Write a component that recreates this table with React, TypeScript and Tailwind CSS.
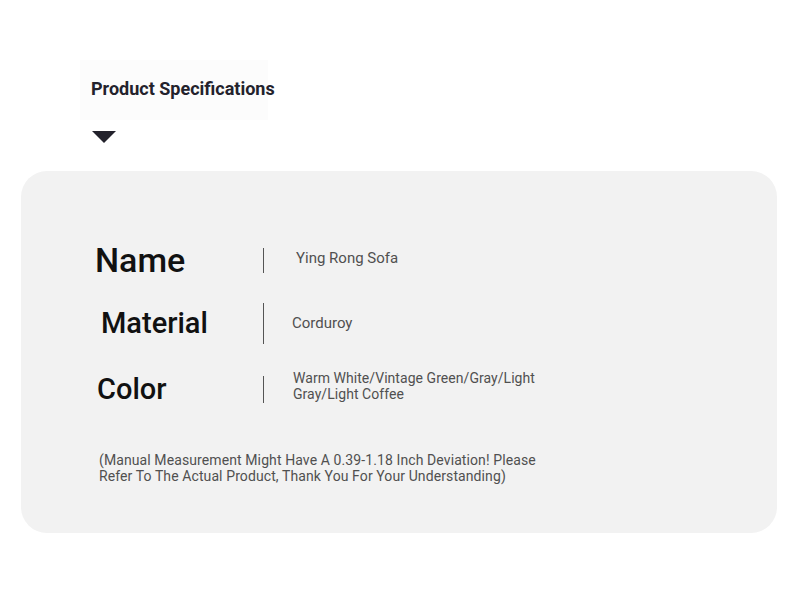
const rows = [
  { label: "Name", labelCls: "pl-0 text-[34px]", bar: "h-[25px]", valueCls: "ml-[32px] mb-[4px] text-[15px] leading-[18px]", value: ["Ying Rong Sofa"] },
  { label: "Material", labelCls: "pl-[6px] text-[29px]", bar: "h-[41px]", valueCls: "ml-[28px] text-[15px] leading-[18px]", value: ["Corduroy"] },
  { label: "Color", labelCls: "pl-[2px] text-[29px]", bar: "h-[27px]", valueCls: "ml-[29px] mb-[6px] text-[14px] leading-[16px] tracking-[0.05px]", value: ["Warm White/Vintage Green/Gray/Light", "Gray/Light Coffee"] },
];

export default function App() {
  return (
    <div className="w-[790px] h-[599px] bg-white pt-[60px] font-['Roboto',sans-serif] overflow-hidden">
      <div className="ml-[80px] w-[188px] h-[60px] bg-[#fcfcfc] flex items-center pl-[11px]">
        <h2 className="text-[18px] font-bold text-[#23222c] mb-[4px] whitespace-nowrap">Product Specifications</h2>
      </div>
      <div className="ml-[92px] mt-[11px] w-0 h-0 border-l-[12px] border-r-[12px] border-t-[12px] border-l-transparent border-r-transparent border-t-[#23222c]" />

      <div className="ml-[21px] mt-[28px] w-[756px] h-[362px] rounded-[26px] bg-[#f2f2f2] pt-[69px]">
        <div className="flex flex-col">
          {rows.map((r, i) => (
            <div
              key={r.label}
              className={`flex items-center h-[40px] ml-[74px] ${i === 1 ? "mt-[23px]" : i === 2 ? "mt-[26px]" : ""}`}
            >
              <div className={`w-[168px] ${r.labelCls} font-medium text-[#111] leading-none`}>
                <span className="block">{r.label}</span>
              </div>
              <div className={`w-px bg-[#555] ${r.bar}`} />
              <div className={`${r.valueCls} text-[#505050]`}>
                {r.value.map((v) => (
                  <div key={v}>{v}</div>
                ))}
              </div>
            </div>
          ))}
        </div>
        <p className="ml-[78px] mt-[43px] text-[14px] leading-[16px] tracking-[0.1px] text-[#505050]">
          (Manual Measurement Might Have A 0.39-1.18 Inch Deviation! Please
          <br />
          Refer To The Actual Product, Thank You For Your Understanding)
        </p>
      </div>
    </div>
  );
}
